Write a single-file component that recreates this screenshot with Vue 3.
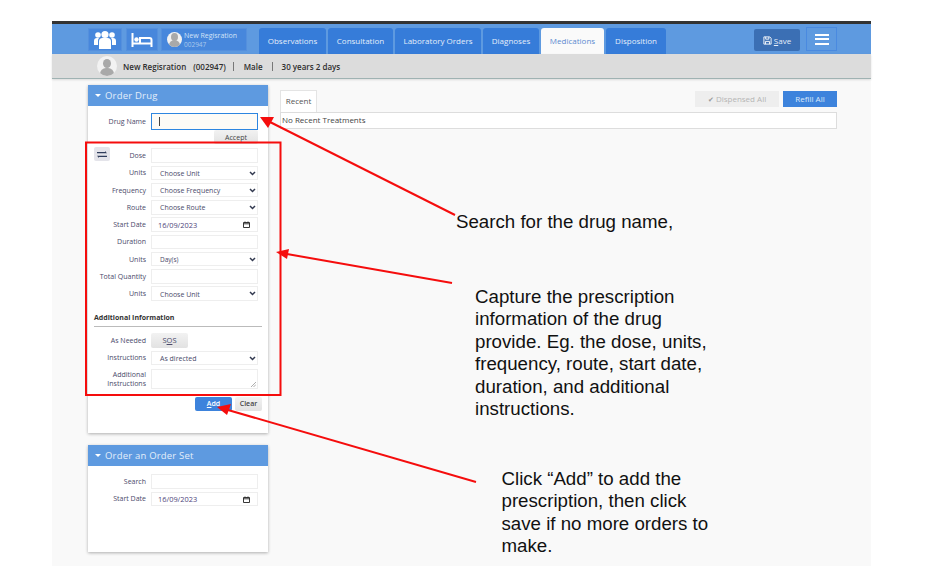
<template>
  <div class="slide">
    <div class="screen">
      <header class="nav">
        <button class="nav-btn icon-btn group-btn">
          <svg width="24" height="20" viewBox="0 0 24 20" fill="#fff">
            <circle cx="5" cy="5" r="2.8" /><circle cx="19" cy="5" r="2.8" /><circle cx="12" cy="4.5" r="3.6" />
            <path d="M1 15V11a3 3 0 0 1 3-3h2a4 4 0 0 0-1 3v4zM23 15V11a3 3 0 0 0-3-3h-2a4 4 0 0 1 1 3v4z" />
            <path d="M6 19v-7.500a3.500 3.500 0 0 1 3.500-3.500h5a3.500 3.500 0 0 1 3.500 3.500V19z" />
          </svg>
        </button>
        <button class="nav-btn icon-btn bed-btn">
          <svg width="22" height="14" viewBox="0 0 22 14" fill="none" stroke="#fff" stroke-width="2">
            <path d="M1.500 0v14M1.500 10.500h19M20.500 14V7a2 2 0 0 0-2-2H9v5.500" />
            <circle cx="5.500" cy="6.500" r="2.200" fill="#fff" stroke="none" />
          </svg>
        </button>
        <div class="nav-btn patient-btn">
          <span class="avatar small"><i></i><b></b></span>
          <div class="patient-text">
            <div>New Regisration</div>
            <div class="patient-id">002947</div>
          </div>
        </div>
        <nav class="tabs">
          <a
            v-for="tab in tabs"
            :key="tab.name"
            class="tab"
            :class="{ active: tab.name === 'Medications' }"
            :style="{ width: tab.width + 'px' }"
          >{{ tab.name }}</a>
        </nav>
        <button class="save">
          <svg width="9" height="9" viewBox="0 0 10 10" fill="none" stroke="#fff" stroke-width="1">
            <path d="M1 1h6.500L9 2.500V9H1zM3 1v2.500h3.500V1M2.800 9V6h4.400v3" />
          </svg>
          <span><u>S</u>ave</span>
        </button>
        <button class="menu"><i></i><i></i><i></i></button>
      </header>

      <div class="patient-bar">
        <span class="avatar"><i></i><b></b></span>
        <span class="patient-name">New Regisration</span>
        <span class="patient-code">(002947)</span>
        <span class="sep first"></span>
        <span>Male</span>
        <span class="sep"></span>
        <span>30 years 2 days</span>
      </div>

      <main class="content">
        <aside class="sidebar">
          <section class="panel drug-panel">
            <h2 class="panel-head"><span class="caret"></span>Order Drug</h2>
            <div class="row drug-row">
              <label>Drug Name</label>
              <div class="field focused"><span class="cursor"></span></div>
            </div>
            <div class="accept-row"><button class="grey-btn accept">Accept</button></div>

            <div class="rows">
              <button class="swap">
                <svg width="10" height="7" viewBox="0 0 10 7" fill="#2f3d5c">
                  <path d="M0 1h8V0l2 2.200H0zM10 4.800H0L2 7V6h8z" />
                </svg>
              </button>
              <div v-for="(row, i) in orderRows" :key="i" class="row">
                <label>{{ row.label }}</label>
                <div class="field" :class="row.type">
                  <span class="value" :class="{ tight: row.value === 'Day(s)' }">{{ row.value }}</span>
                  <svg v-if="row.type === 'select'" class="chev" width="7" height="5" viewBox="0 0 7 5" fill="none" stroke="#333a50" stroke-width="1.500">
                    <path d="M1 1l2.500 2.500L6 1" />
                  </svg>
                  <svg v-if="row.type === 'date'" class="cal" width="7" height="7" viewBox="0 0 7 7" fill="none" stroke="#222" stroke-width="0.900">
                    <path d="M.5 1.500h6v5h-6zM.5 2.800h6M2 .5v1M5 .5v1" />
                  </svg>
                </div>
              </div>
            </div>

            <h3 class="sub-head">Additional Information</h3>
            <div class="row sos-row">
              <label>As Needed</label>
              <button class="grey-btn sos">S<u>O</u>S</button>
            </div>
            <div class="row">
              <label>Instructions</label>
              <div class="field select">
                <span class="value">As directed</span>
                <svg class="chev" width="7" height="5" viewBox="0 0 7 5" fill="none" stroke="#333a50" stroke-width="1.500">
                  <path d="M1 1l2.500 2.500L6 1" />
                </svg>
              </div>
            </div>
            <div class="row area-row">
              <label>Additional<br />Instructions</label>
              <div class="field area">
                <svg class="grip" width="5" height="5" viewBox="0 0 5 5" stroke="#777" stroke-width="0.600">
                  <path d="M0 5l5-5M2.500 5L5 2.500" />
                </svg>
              </div>
            </div>
            <div class="form-actions">
              <button class="add"><u>A</u>dd</button>
              <button class="grey-btn clear">Clear</button>
            </div>
          </section>

          <section class="panel set-panel">
            <h2 class="panel-head"><span class="caret"></span>Order an Order Set</h2>
            <div class="set-rows">
              <div class="row">
                <label>Search</label>
                <div class="field"></div>
              </div>
              <div class="row">
                <label>Start Date</label>
                <div class="field date">
                  <span class="value">16/09/2023</span>
                  <svg class="cal" width="7" height="7" viewBox="0 0 7 7" fill="none" stroke="#222" stroke-width="0.900">
                    <path d="M.5 1.500h6v5h-6zM.5 2.800h6M2 .5v1M5 .5v1" />
                  </svg>
                </div>
              </div>
            </div>
          </section>
        </aside>

        <section class="treatments">
          <div class="treat-top">
            <div class="recent-tab">Recent</div>
            <div class="treat-actions">
              <button class="dispensed"><span class="tick">✔</span> Dispensed All</button>
              <button class="refill">Refill All</button>
            </div>
          </div>
          <div class="treat-box">No Recent Treatments</div>
        </section>
      </main>
    </div>

    <!-- annotations drawn on top of the screenshot -->
    <svg class="overlay" width="944" height="566" viewBox="0 0 944 566" fill="none">
      <rect x="86" y="142.500" width="194.500" height="252.500" stroke="#f50d0d" stroke-width="2" />
      <g stroke="#f50d0d" stroke-width="2">
        <path d="M455 215L268 121" />
        <path d="M452 283L287 254" />
        <path d="M476 482L228 410" />
      </g>
      <g fill="#f50d0d">
        <path d="M260 117L274 117L268 128z" />
        <path d="M276 252L289 249L287 259z" />
        <path d="M217 407L231 404L227 415z" />
      </g>
    </svg>
    <p class="note note-search">Search for the drug name,</p>
    <p class="note note-capture">Capture the prescription<br />information of the drug<br />provide. Eg. the dose, units,<br />frequency, route, start date,<br />duration, and additional<br />instructions.</p>
    <p class="note note-add">Click “Add” to add the<br />prescription, then click<br />save if no more orders to<br />make.</p>
  </div>
</template>

<script setup>
const tabs = [
  { name: 'Observations', width: 67 },
  { name: 'Consultation', width: 65 },
  { name: 'Laboratory Orders', width: 86 },
  { name: 'Diagnoses', width: 56 },
  { name: 'Medications', width: 63 },
  { name: 'Disposition', width: 60 }
]

const orderRows = [
  { label: 'Dose', type: 'text', value: '' },
  { label: 'Units', type: 'select', value: 'Choose Unit' },
  { label: 'Frequency', type: 'select', value: 'Choose Frequency' },
  { label: 'Route', type: 'select', value: 'Choose Route' },
  { label: 'Start Date', type: 'date', value: '16/09/2023' },
  { label: 'Duration', type: 'text', value: '' },
  { label: 'Units', type: 'select', value: 'Day(s)' },
  { label: 'Total Quantity', type: 'text', value: '' },
  { label: 'Units', type: 'select', value: 'Choose Unit' }
]
</script>

<style>
html,
body {
  margin: 0;
  background: #fff;
}
</style>

<style scoped>
.slide {
  position: relative;
  width: 944px;
  height: 566px;
  overflow: hidden;
  background: #fff;
  padding: 21px 73px 0 52px;
  box-sizing: border-box;
  font-family: "Open Sans", "Liberation Sans", sans-serif;
}

.screen {
  height: 545px;
  background: #f9f9f9;
  border-top: 3px solid #333;
  box-sizing: border-box;
  display: flex;
  flex-direction: column;
}

button {
  font-family: inherit;
  border: none;
  padding: 0;
}

.nav {
  height: 30px;
  background: #5e9ae0;
  display: flex;
  padding-left: 36px;
  padding-right: 34px;
  flex-shrink: 0;
}

.nav-btn {
  margin-top: 4px;
  height: 23px;
  background: #4787dc;
  border: 1px solid #5590dd;
  box-sizing: border-box;
}

.icon-btn {
  display: flex;
  align-items: center;
  justify-content: center;
}

.group-btn {
  width: 34px;
  margin-right: 4px;
}

.bed-btn {
  width: 32px;
  margin-right: 3px;
}

.patient-btn {
  width: 86px;
  display: flex;
  align-items: center;
  gap: 2px;
  padding-left: 5px;
  color: #d4e3f7;
  font-size: 7px;
  line-height: 9px;
}

.patient-id {
  color: #a9c7ec;
  font-size: 6.500px;
}

.avatar {
  width: 20px;
  height: 20px;
  border-radius: 50%;
  background: #f2f2f2;
  position: relative;
  overflow: hidden;
  flex-shrink: 0;
}

.avatar i {
  position: absolute;
  left: 6px;
  top: 3px;
  width: 8px;
  height: 9px;
  border-radius: 50%;
  background: #a9a9a9;
}

.avatar b {
  position: absolute;
  left: 3px;
  top: 12px;
  width: 14px;
  height: 10px;
  border-radius: 6px 6px 0 0;
  background: #a9a9a9;
}

.avatar.small {
  width: 15px;
  height: 15px;
}

.avatar.small i {
  left: 4px;
  top: 1px;
  width: 7px;
  height: 8px;
}

.avatar.small b {
  left: 2px;
  top: 8px;
  width: 11px;
  height: 8px;
}

.tabs {
  display: flex;
  gap: 2px;
  margin-left: 12px;
  flex: 1;
}

.tab {
  margin-top: 4px;
  height: 26px;
  box-sizing: border-box;
  padding-bottom: 2px;
  background: #367cd9;
  border-radius: 3px 3px 0 0;
  color: #e4eefa;
  font-size: 8px;
  display: flex;
  align-items: center;
  justify-content: center;
  white-space: nowrap;
}

.tab.active {
  background: #fafafa;
  color: #5b8ad0;
}

.save {
  margin-top: 5px;
  width: 46px;
  height: 22px;
  background: #3b6fb4;
  border-radius: 2px;
  color: #e6eefa;
  font-size: 8px;
  display: flex;
  align-items: center;
  justify-content: center;
  gap: 2px;
}

.menu {
  margin-top: 3px;
  margin-left: 6px;
  width: 31px;
  height: 24px;
  background: #5e9ae0;
  border: 1px solid #4a8ae0;
  box-sizing: border-box;
  display: flex;
  flex-direction: column;
  align-items: center;
  justify-content: center;
  gap: 2.500px;
}

.menu i {
  width: 14px;
  height: 2px;
  background: #fff;
}

.patient-bar {
  height: 24px;
  background: #dcdcdc;
  border-bottom: 1px solid #9fb2b2;
  box-shadow: 0 1px 2px rgba(0, 0, 0, 0.12);
  display: flex;
  align-items: center;
  padding-left: 45px;
  color: #2e2e2e;
  font-size: 8px;
  font-weight: 600;
  flex-shrink: 0;
}

.patient-name {
  margin-left: 6px;
}

.patient-code {
  margin-left: 7px;
}

.sep {
  width: 1px;
  height: 9px;
  background: #777;
  margin: 0 9px;
}

.sep.first {
  margin: 0 10px 0 7px;
}

.content {
  display: flex;
  gap: 12px;
  padding: 6px 34px 0 36px;
}

.sidebar {
  width: 180px;
  flex-shrink: 0;
  display: flex;
  flex-direction: column;
  gap: 12px;
}

.panel {
  background: #fff;
  box-shadow: 0 1px 3px rgba(0, 0, 0, 0.3);
}

.drug-panel {
  height: 348px;
}

.set-panel {
  height: 107px;
}

.panel-head {
  margin: 0;
  height: 21px;
  background: #5e9ae0;
  color: #e4eefa;
  font-size: 9.500px;
  font-weight: 400;
  display: flex;
  align-items: center;
  padding-left: 7px;
  letter-spacing: 0.200px;
}

.caret {
  width: 0;
  height: 0;
  border-left: 3px solid transparent;
  border-right: 3px solid transparent;
  border-top: 3px solid #fff;
  margin-right: 4px;
}

.row {
  display: flex;
  align-items: center;
  height: 17.250px;
}

.row label {
  width: 58px;
  text-align: right;
  color: #4a4a6a;
  font-size: 7px;
  line-height: 9px;
  flex-shrink: 0;
  white-space: nowrap;
}

.field {
  margin-left: 5px;
  width: 107px;
  height: 14.500px;
  box-sizing: border-box;
  background: #fff;
  border: 1px solid #eee;
  position: relative;
  display: flex;
  align-items: center;
}

.field .value {
  font-size: 7px;
  color: #4a4a6a;
  padding-left: 8px;
  padding-top: 1px;
}

.field .value.tight {
  font-size: 6.500px;
}

.field.date .value {
  padding-left: 6px;
  padding-top: 0;
  font-size: 7.400px;
  color: #4d3f7a;
}

.chev,
.cal {
  position: absolute;
  right: 1px;
  top: 4px;
}

.cal {
  right: 7px;
  top: 3px;
}

.drug-row {
  margin-top: 7px;
  height: 17px;
}

.field.focused {
  height: 17px;
  background: #fdfbf6;
  border: 1.500px solid #2e86e0;
}

.cursor {
  width: 1px;
  height: 9px;
  background: #444;
  margin-left: 7px;
}

.accept-row {
  display: flex;
  justify-content: flex-end;
  align-items: flex-start;
  padding-right: 10px;
  height: 11px;
}

.grey-btn {
  background: linear-gradient(#f2f2f2, #e2e2e2);
  color: #444;
  border-radius: 2px;
  font-size: 7px;
}

.accept {
  width: 44px;
  height: 14px;
  flex-shrink: 0;
}

.rows {
  position: relative;
  margin-top: 6px;
}

.swap {
  position: absolute;
  left: 6px;
  top: 0;
  width: 16px;
  height: 14px;
  background: #e4e4ea;
  border-radius: 2px;
  display: flex;
  align-items: center;
  justify-content: center;
}

.sub-head {
  margin: 9px 6px 0 6px;
  height: 15px;
  border-bottom: 1px solid #bbb;
  font-size: 7px;
  font-weight: 700;
  color: #333;
  line-height: 13px;
}

.sos-row {
  margin-top: 4px;
  height: 18px;
}

.sos {
  margin-left: 5px;
  width: 37px;
  height: 15px;
  font-size: 7.500px;
  color: #4a4a6a;
}

.area-row {
  height: 21px;
  margin-top: 2px;
}

.field.area {
  height: 20px;
}

.grip {
  position: absolute;
  right: 1px;
  bottom: 1px;
}

.form-actions {
  display: flex;
  justify-content: flex-end;
  gap: 3px;
  margin-top: 7px;
  padding-right: 6px;
}

.add {
  width: 37px;
  height: 14px;
  background: #3d83dc;
  color: #fff;
  border-radius: 2px;
  font-size: 7px;
  font-weight: 600;
}

.clear {
  width: 27px;
  height: 14px;
  font-weight: 600;
}

.set-rows {
  margin-top: 7px;
}

.treatments {
  flex: 1;
  min-width: 0;
}

.treat-top {
  height: 27px;
  display: flex;
  justify-content: space-between;
}

.recent-tab {
  width: 37px;
  height: 22px;
  margin-top: 5px;
  box-sizing: border-box;
  background: #fff;
  border: 1px solid #e4e4e4;
  border-bottom: none;
  font-size: 8px;
  color: #555;
  text-align: center;
  line-height: 20px;
}

.treat-actions {
  display: flex;
  gap: 4px;
  margin-top: 6px;
}

.dispensed {
  width: 84px;
  height: 16px;
  padding-bottom: 2px;
  background: #eee;
  color: #b5b5b5;
  font-size: 8px;
}

.tick {
  color: #999;
  font-size: 7px;
}

.refill {
  width: 54px;
  height: 16px;
  padding-bottom: 2px;
  background: #3d83dc;
  color: #dce9fa;
  font-size: 8px;
}

.treat-box {
  height: 17px;
  box-sizing: border-box;
  background: #fff;
  border: 1px solid #ddd;
  font-size: 8px;
  color: #444;
  line-height: 13px;
  padding-left: 1px;
}

.overlay {
  position: absolute;
  left: 0;
  top: 0;
}

.note {
  position: absolute;
  margin: 0;
  font-family: "Liberation Sans", Arial, sans-serif;
  font-size: 18.700px;
  line-height: 22.400px;
  color: #111;
  white-space: nowrap;
}

.note-search {
  left: 456px;
  top: 211px;
}

.note-capture {
  left: 475px;
  top: 286px;
}

.note-add {
  left: 501.500px;
  top: 468px;
}
</style>
